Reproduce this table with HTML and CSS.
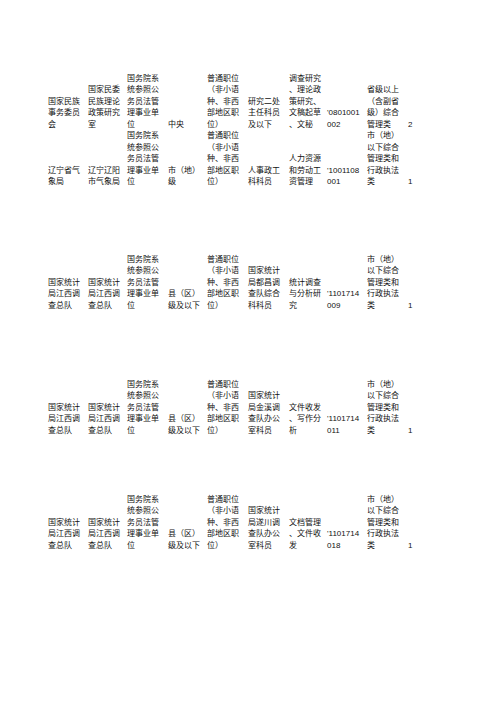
FILE: index.html
```html
<!DOCTYPE html>
<html lang="zh-CN">
<head>
<meta charset="utf-8">
<title>职位表</title>
<link rel="stylesheet" href="styles.css">
</head>
<body>
<div class="sheet">
  <div class="row r1">
    <div class="c">国家民族<br>事务委员<br>会</div>
    <div class="c">国家民委<br>民族理论<br>政策研究<br>室</div>
    <div class="c">国务院系<br>统参照公<br>务员法管<br>理事业单<br>位</div>
    <div class="c">中央</div>
    <div class="c">普通职位<br>（非小语<br>种、非西<br>部地区职<br>位）</div>
    <div class="c">研究二处<br>主任科员<br>及以下</div>
    <div class="c">调查研究<br>、理论政<br>策研究、<br>文稿起草<br>、文秘</div>
    <div class="c">'0801001<br>002</div>
    <div class="c">省级以上<br>（含副省<br>级）综合<br>管理类</div>
    <div class="c">2</div>
  </div>
  <div class="row r2">
    <div class="c">辽宁省气<br>象局</div>
    <div class="c">辽宁辽阳<br>市气象局</div>
    <div class="c">国务院系<br>统参照公<br>务员法管<br>理事业单<br>位</div>
    <div class="c">市（地）<br>级</div>
    <div class="c">普通职位<br>（非小语<br>种、非西<br>部地区职<br>位）</div>
    <div class="c">人事政工<br>科科员</div>
    <div class="c">人力资源<br>和劳动工<br>资管理</div>
    <div class="c">'1001108<br>001</div>
    <div class="c">市（地）<br>以下综合<br>管理类和<br>行政执法<br>类</div>
    <div class="c">1</div>
  </div>
  <div class="row r3">
    <div class="c">国家统计<br>局江西调<br>查总队</div>
    <div class="c">国家统计<br>局江西调<br>查总队</div>
    <div class="c">国务院系<br>统参照公<br>务员法管<br>理事业单<br>位</div>
    <div class="c">县（区）<br>级及以下</div>
    <div class="c">普通职位<br>（非小语<br>种、非西<br>部地区职<br>位）</div>
    <div class="c">国家统计<br>局都昌调<br>查队综合<br>科科员</div>
    <div class="c">统计调查<br>与分析研<br>究</div>
    <div class="c">'1101714<br>009</div>
    <div class="c">市（地）<br>以下综合<br>管理类和<br>行政执法<br>类</div>
    <div class="c">1</div>
  </div>
  <div class="row r4">
    <div class="c">国家统计<br>局江西调<br>查总队</div>
    <div class="c">国家统计<br>局江西调<br>查总队</div>
    <div class="c">国务院系<br>统参照公<br>务员法管<br>理事业单<br>位</div>
    <div class="c">县（区）<br>级及以下</div>
    <div class="c">普通职位<br>（非小语<br>种、非西<br>部地区职<br>位）</div>
    <div class="c">国家统计<br>局金溪调<br>查队办公<br>室科员</div>
    <div class="c">文件收发<br>、写作分<br>析</div>
    <div class="c">'1101714<br>011</div>
    <div class="c">市（地）<br>以下综合<br>管理类和<br>行政执法<br>类</div>
    <div class="c">1</div>
  </div>
  <div class="row r5">
    <div class="c">国家统计<br>局江西调<br>查总队</div>
    <div class="c">国家统计<br>局江西调<br>查总队</div>
    <div class="c">国务院系<br>统参照公<br>务员法管<br>理事业单<br>位</div>
    <div class="c">县（区）<br>级及以下</div>
    <div class="c">普通职位<br>（非小语<br>种、非西<br>部地区职<br>位）</div>
    <div class="c">国家统计<br>局遂川调<br>查队办公<br>室科员</div>
    <div class="c">文档管理<br>、文件收<br>发</div>
    <div class="c">'1101714<br>018</div>
    <div class="c">市（地）<br>以下综合<br>管理类和<br>行政执法<br>类</div>
    <div class="c">1</div>
  </div>
</div>
</body>
</html>
```
FILE: styles.css
```css
html, body {
  margin: 0;
  padding: 0;
  background: #ffffff;
}

body {
  width: 496px;
  height: 702px;
  overflow: hidden;
  font-family: "Liberation Sans", "Noto Sans CJK SC", sans-serif;
  font-size: 8px;
  line-height: 11.5px;
  color: #111111;
}

.sheet {
  padding-top: 72px;
  padding-left: 48px;
}

.row {
  display: grid;
  grid-template-columns: 40px 39px 41px 39px 41px 41px 38px 40px 41px 20px;
  align-items: end;
}

.c {
  white-space: nowrap;
}

.r1 { height: 58px; }
.r2 { height: 53px; }
.r3 { height: 128px; }
.r4 { height: 125px; }
.r5 { height: 115px; }
```
